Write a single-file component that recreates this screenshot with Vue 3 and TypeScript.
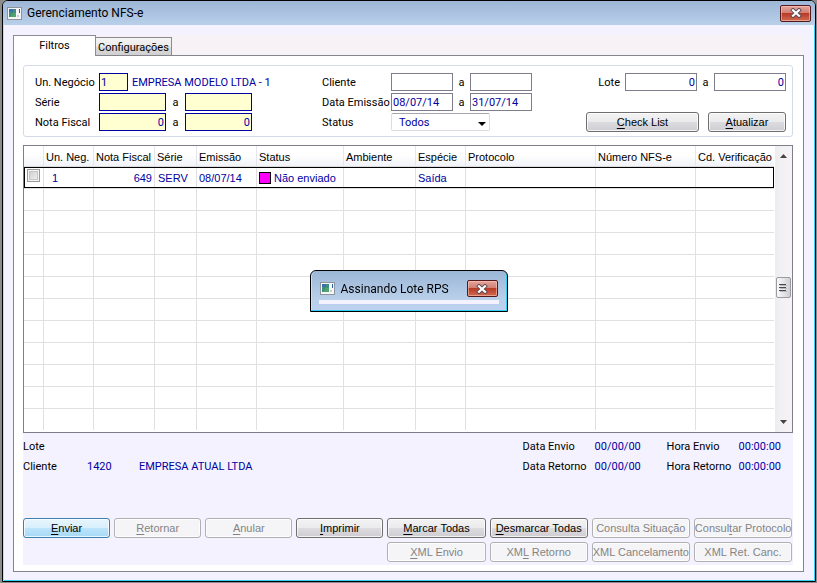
<script setup lang="ts">
import { ref } from 'vue'

interface Column {
  title: string
  width: number
}

interface Action {
  before: string
  key: string
  after: string
  disabled?: boolean
  primary?: boolean
}

const columns: Column[] = [
  { title: '', width: 20 },
  { title: 'Un. Neg.', width: 50 },
  { title: 'Nota Fiscal', width: 61 },
  { title: 'Série', width: 42 },
  { title: 'Emissão', width: 60 },
  { title: 'Status', width: 87 },
  { title: 'Ambiente', width: 72 },
  { title: 'Espécie', width: 50 },
  { title: 'Protocolo', width: 130 },
  { title: 'Número NFS-e', width: 100 },
  { title: 'Cd. Verificação', width: 78 },
]
const totalWidth = columns.reduce((sum, c) => sum + c.width, 0)
const emptyRows = 11

const mainActions: Action[] = [
  { before: '', key: 'E', after: 'nviar', primary: true },
  { before: '', key: 'R', after: 'etornar', disabled: true },
  { before: '', key: 'A', after: 'nular', disabled: true },
  { before: '', key: 'I', after: 'mprimir' },
  { before: '', key: 'M', after: 'arcar Todas' },
  { before: '', key: 'D', after: 'esmarcar Todas' },
  { before: 'Consulta Situação', key: '', after: '', disabled: true },
  { before: 'Consul', key: 't', after: 'ar Protocolo', disabled: true },
  { before: '', key: 'X', after: 'ML Envio', disabled: true },
  { before: 'XM', key: 'L', after: ' Retorno', disabled: true },
  { before: 'XML Cancelamento', key: '', after: '', disabled: true },
  { before: 'XML Ret. Canc.', key: '', after: '', disabled: true },
]

const unit = ref('1')
const serieFrom = ref('')
const serieTo = ref('')
const notaFrom = ref('0')
const notaTo = ref('0')
const clientFrom = ref('')
const clientTo = ref('')
const dateFrom = ref('08/07/14')
const dateTo = ref('31/07/14')
const loteFrom = ref('0')
const loteTo = ref('0')
const status = ref('Todos')
const checked = ref(false)
</script>

<template>
  <div class="desktop">
    <main class="window">
      <header class="titlebar">
        <svg class="app-icon" width="15" height="13" viewBox="0 0 15 13" aria-hidden="true">
          <rect x="0.5" y="0.5" width="14" height="12" fill="#f4f6f8" stroke="#8d949c" />
          <rect x="2" y="2" width="7" height="8" fill="#3f8f7c" />
          <path d="M2 2h4v3h-4z" fill="#3c6fae" />
          <path d="M6 6h3v4h-6z" fill="#4fa56a" />
          <rect x="10" y="8" width="2" height="2" fill="#c9ced4" />
          <rect x="12" y="2" width="1" height="4" fill="#2d5f9e" />
        </svg>
        <h1>Gerenciamento NFS-e</h1>
        <button type="button" class="close" aria-label="Fechar">
          <svg width="12" height="10" viewBox="0 0 12 10" aria-hidden="true">
            <path d="M3 2.2l6 5.6M9 2.2l-6 5.6" stroke="#5b4a52" stroke-width="4" stroke-linecap="square" />
            <path d="M3 2.2l6 5.6M9 2.2l-6 5.6" stroke="#fff" stroke-width="2.2" stroke-linecap="square" />
          </svg>
        </button>
      </header>

      <div class="body">
        <div class="tabs" role="tablist">
          <button type="button" role="tab" class="tab active" aria-selected="true">Filtros</button>
          <button type="button" role="tab" class="tab" aria-selected="false">Configurações</button>
        </div>

        <section class="panel">
          <form class="filters" @submit.prevent>
            <div class="group own">
              <label for="unit">Un. Negócio</label>
              <div class="unit">
                <input id="unit" v-model="unit" class="yellow short" />
                <span class="value">EMPRESA MODELO LTDA - 1</span>
              </div>
              <label for="serie">Série</label>
              <input id="serie" v-model="serieFrom" class="yellow" />
              <span class="to">a</span>
              <input v-model="serieTo" class="yellow" aria-label="Série final" />
              <label for="nota">Nota Fiscal</label>
              <input id="nota" v-model="notaFrom" class="yellow num" />
              <span class="to">a</span>
              <input v-model="notaTo" class="yellow num" aria-label="Nota Fiscal final" />
            </div>

            <div class="group client">
              <label for="client">Cliente</label>
              <input id="client" v-model="clientFrom" />
              <span class="to">a</span>
              <input v-model="clientTo" aria-label="Cliente final" />
              <label for="date">Data Emissão</label>
              <input id="date" v-model="dateFrom" />
              <span class="to">a</span>
              <input v-model="dateTo" aria-label="Data Emissão final" />
              <label for="status">Status</label>
              <div class="select">
                <select id="status" v-model="status">
                  <option>Todos</option>
                </select>
              </div>
            </div>

            <div class="lote">
              <div class="lote-row">
                <label for="lote">Lote</label>
                <input id="lote" v-model="loteFrom" class="num" />
                <span class="to">a</span>
                <input v-model="loteTo" class="num" aria-label="Lote final" />
              </div>
              <div class="lote-buttons">
                <button type="button" class="btn check"><u>C</u>heck List</button>
                <button type="button" class="btn refresh"><u>A</u>tualizar</button>
              </div>
            </div>
          </form>

          <div class="grid">
            <table>
              <colgroup>
                <col v-for="(c, i) in columns" :key="i" :style="{ width: (c.width / totalWidth) * 100 + '%' }" />
              </colgroup>
              <thead>
                <tr>
                  <th v-for="(c, i) in columns" :key="i" scope="col">{{ c.title }}</th>
                </tr>
              </thead>
              <tbody>
                <tr class="selected">
                  <td class="tick"><input v-model="checked" type="checkbox" aria-label="Selecionar nota 649" /></td>
                  <td class="unit-cell">1</td>
                  <td class="right">649</td>
                  <td>SERV</td>
                  <td class="tight">08/07/14</td>
                  <td class="tight"><span class="status"><i class="swatch"></i>Não enviado</span></td>
                  <td></td>
                  <td class="tight">Saída</td>
                  <td></td>
                  <td></td>
                  <td></td>
                </tr>
                <tr v-for="n in emptyRows" :key="n" class="empty">
                  <td v-for="(c, i) in columns" :key="i"></td>
                </tr>
              </tbody>
            </table>
            <div class="scrollbar" aria-hidden="true">
              <svg width="7" height="4" viewBox="0 0 7 4"><path d="M0 4L3.5 0L7 4z" fill="#444" /></svg>
              <div class="thumb">
                <svg width="8" height="8" viewBox="0 0 8 8"><path d="M0 0.5h7M0 3.5h7M0 6.5h7" stroke="#4a4a4a" /><path d="M1 1.5h7M1 4.5h7M1 7.5h7" stroke="#b9b9bd" /></svg>
              </div>
              <svg width="7" height="4" viewBox="0 0 7 4"><path d="M0 0L3.5 4L7 0z" fill="#444" /></svg>
            </div>
          </div>

          <footer class="footer">
            <div class="info">
              <dl class="info-left">
                <dt>Lote</dt><dd></dd><dd></dd>
                <dt>Cliente</dt><dd>1420</dd><dd>EMPRESA ATUAL LTDA</dd>
              </dl>
              <dl class="info-right">
                <dt>Data Envio</dt><dd>00/00/00</dd><dt>Hora Envio</dt><dd>00:00:00</dd>
                <dt>Data Retorno</dt><dd>00/00/00</dd><dt>Hora Retorno</dt><dd>00:00:00</dd>
              </dl>
            </div>
            <div class="actions">
              <button
                v-for="(a, i) in mainActions"
                :key="i"
                type="button"
                class="btn"
                :class="{ primary: a.primary, second: i === 8 }"
                :disabled="a.disabled"
              >{{ a.before }}<u v-if="a.key">{{ a.key }}</u>{{ a.after }}</button>
            </div>
          </footer>
        </section>
      </div>
    </main>

    <div class="dialog" role="dialog" aria-labelledby="dialog-title">
      <div class="dialog-bar">
        <svg class="app-icon" width="15" height="13" viewBox="0 0 15 13" aria-hidden="true">
          <rect x="0.5" y="0.5" width="14" height="12" fill="#f4f6f8" stroke="#8d949c" />
          <rect x="2" y="2" width="7" height="8" fill="#3f8f7c" />
          <path d="M2 2h4v3h-4z" fill="#3c6fae" />
          <path d="M6 6h3v4h-6z" fill="#4fa56a" />
          <rect x="10" y="8" width="2" height="2" fill="#c9ced4" />
          <rect x="12" y="2" width="1" height="4" fill="#2d5f9e" />
        </svg>
        <h2 id="dialog-title">Assinando Lote RPS</h2>
        <button type="button" class="close" aria-label="Fechar">
          <svg width="12" height="10" viewBox="0 0 12 10" aria-hidden="true">
            <path d="M3 2.2l6 5.6M9 2.2l-6 5.6" stroke="#5b4a52" stroke-width="4" stroke-linecap="square" />
            <path d="M3 2.2l6 5.6M9 2.2l-6 5.6" stroke="#fff" stroke-width="2.2" stroke-linecap="square" />
          </svg>
        </button>
      </div>
      <div class="dialog-body"></div>
    </div>
  </div>
</template>

<style>
body {
  margin: 0;
}
</style>

<style scoped>
* {
  box-sizing: border-box;
}
.desktop {
  display: flex;
  min-height: 100vh;
  padding: 0 1px 1px 2px;
  background: #8c8c8c;
  color: #000;
  font-family: Roboto, 'Liberation Sans', sans-serif;
  font-size: 11px;
  line-height: 14px;
}
button,
input,
select {
  margin: 0;
  font: inherit;
  color: inherit;
}
.window {
  flex: 1;
  min-width: 0;
  display: flex;
  flex-direction: column;
  border: 1px solid #000;
  border-radius: 6px 6px 0 0;
  background: #f5f2ff;
  box-shadow: inset 1px 0 #bfdcf2, inset -1px -1px #2fd2f5;
  overflow: hidden;
}
.titlebar {
  display: flex;
  align-items: center;
  height: 24px;
  padding: 0 4px;
  background: linear-gradient(#9cb6d6, #b9d0ea);
}
h1,
h2 {
  margin: 0;
  flex: 1;
  font-size: 12px;
  line-height: 16px;
  font-weight: 400;
}
h1 {
  padding-left: 5px;
}
.app-icon {
  flex: none;
}
.close {
  display: flex;
  align-items: center;
  justify-content: center;
  width: 31px;
  height: 17px;
  padding: 0;
  border: 1px solid #54191c;
  border-radius: 2px;
  background: linear-gradient(#e3a49a, #d27e72 48%, #b93a26 50%, #cf6c50);
  box-shadow: inset 0 0 0 1px rgba(255, 205, 195, 0.55);
}
.body {
  flex: 1;
  display: flex;
  flex-direction: column;
  padding: 10px 11px 9px 10px;
}
.tabs {
  display: flex;
  align-items: flex-end;
  height: 20px;
  background: #f6f2f5;
}
.tab {
  height: 18px;
  padding: 2px 2px 0;
  border: 1px solid #8b8b93;
  border-bottom: 0;
  border-left: 0;
  background: linear-gradient(#f4f4f4, #ebebeb 50%, #dcdcdc 52%, #d0d0d0);
}
.tab.active {
  position: relative;
  z-index: 1;
  width: 83px;
  height: 21px;
  margin-bottom: -1px;
  padding: 0;
  border-left: 1px solid #8b8b93;
  background: #fff;
}
.panel {
  flex: 1;
  display: flex;
  flex-direction: column;
  padding: 9px 10px 6px 9px;
  border: 1px solid #85858d;
  background: #fff;
}
.filters {
  display: flex;
  padding: 7px 6px 4px 11px;
  border: 1px solid #d3dce6;
  border-radius: 3px;
}
.group {
  display: grid;
  grid-auto-rows: 18px;
  row-gap: 2px;
  align-items: center;
  padding-bottom: 1px;
}
.own {
  grid-template-columns: 64px 67px 19px 67px;
}
.client {
  grid-template-columns: 69px 62px 17px 62px;
  margin-left: 70px;
}
label,
.to,
.value {
  padding-top: 2px;
  white-space: nowrap;
}
.to {
  min-width: 7px;
  text-align: center;
}
.unit {
  grid-column: 2 / -1;
  display: flex;
  align-items: center;
  gap: 4px;
}
.value {
  color: #0000a0;
}
.filters input {
  width: 100%;
  height: 18px;
  min-width: 0;
  padding: 1px 1px 0;
  border: 1px solid #7d7d8c;
  background: #fff;
  color: #0000a0;
  outline: 0;
}
.filters .yellow {
  border-color: #0000a0;
  background: #ffffd2;
}
.filters .short {
  flex: none;
  width: 29px;
}
.filters .num {
  text-align: right;
}
.select {
  position: relative;
  grid-column: 2 / -1;
  width: 99px;
}
.select::after {
  content: '';
  position: absolute;
  top: 9px;
  right: 4px;
  border: 4px solid transparent;
  border-top-color: #000;
  border-bottom: 0;
  pointer-events: none;
}
select {
  display: block;
  width: 100%;
  height: 18px;
  padding: 2px 7px 0;
  appearance: none;
  border: 1px solid #dcdce4;
  border-top-color: #a5a5ad;
  border-radius: 2px;
  background: #fff;
  color: #0000a0;
}
.lote {
  display: flex;
  flex-direction: column;
  justify-content: space-between;
  margin-left: auto;
}
.lote-row {
  display: flex;
  align-items: center;
  justify-content: flex-end;
  gap: 5px;
}
.filters .lote-row input {
  width: 72px;
}
.lote-buttons {
  display: flex;
  gap: 9px;
}
.btn {
  height: 20px;
  padding: 0;
  border: 1px solid #6f6f6f;
  border-radius: 3px;
  background: linear-gradient(#f3f3f4, #ebebed 48%, #dcdbdf 52%, #cfcdd3);
  box-shadow: inset 0 0 0 1px rgba(255, 255, 255, 0.75);
  font-family: 'Liberation Sans', sans-serif;
  white-space: nowrap;
}
.btn u {
  text-underline-offset: 2px;
}
.btn:disabled {
  border-color: #b1b1b4;
  background: #f5f5f7;
  color: #848484;
}
.btn.primary {
  border-color: #3c7fb1;
  background: linear-gradient(#e8f5fc, #d8effc 48%, #bce4fb 52%, #a6d9f6);
}
.check {
  width: 113px;
}
.refresh {
  width: 78px;
}
.grid {
  display: flex;
  margin-top: 8px;
  border: 1px solid #7d7d8c;
}
table {
  flex: 1;
  min-width: 0;
  align-self: flex-start;
  table-layout: fixed;
  border-spacing: 0;
  font-family: 'Liberation Sans', sans-serif;
}
th,
td {
  padding: 0 3px;
  overflow: hidden;
  font-weight: 400;
  text-align: left;
  white-space: nowrap;
}
th {
  height: 21px;
  padding: 2px 2px 0;
  border-right: 1px solid #e4e6ec;
  border-bottom: 1px solid #dcdcde;
  background: linear-gradient(#fff 45%, #f1f3f8);
}
td {
  height: 22px;
  border-top: 1px solid #e2dfe2;
  border-right: 1px solid #e2dfe2;
  color: #0000a0;
}
th:last-child,
td:last-child {
  border-right: 0;
}
.selected {
  outline: 1px solid #000;
  outline-offset: -1px;
}
.selected td {
  height: 21px;
  border-top: 0;
}
.tick {
  padding: 0 2px;
}
.tick input {
  display: block;
  width: 13px;
  height: 13px;
  margin: 0 0 4px 1px;
  appearance: none;
  border: 1px solid #9a9a9a;
  background: linear-gradient(135deg, #c8c8c8, #f6f6f6);
  box-shadow: inset 0 0 0 1px #f4f4f4, inset 0 0 0 2px #c4c8c8;
}
.unit-cell {
  padding-left: 8px;
}
.right {
  text-align: right;
  padding-right: 2px;
}
.tight {
  padding: 0 2px;
}
.status {
  display: flex;
  align-items: center;
  gap: 3px;
}
.swatch {
  width: 12px;
  height: 12px;
  border: 1px solid #000;
  background: #f0f;
}
.scrollbar {
  display: flex;
  flex-direction: column;
  align-items: center;
  justify-content: space-between;
  width: 18px;
  min-height: 286px;
  padding: 8px 1px;
  background: linear-gradient(90deg, #fff 1px, #ececee 1px, #f3f1f4 9px, #f6f2f5);
}
.thumb {
  display: flex;
  align-items: center;
  justify-content: center;
  width: 15px;
  height: 21px;
  margin-bottom: 3px;
  border: 1px solid #9b9ba0;
  border-radius: 2px;
  background: linear-gradient(90deg, #f8f8f9, #e6e6e9 50%, #cfcfd4);
}
.footer {
  flex: 1;
  display: flex;
  flex-direction: column;
  justify-content: space-between;
  padding: 4px 0 3px;
  background: #f5f2ff;
}
.info {
  display: flex;
  justify-content: space-between;
  padding-right: 12px;
}
dl {
  display: grid;
  grid-auto-rows: 20px;
  align-items: center;
  margin: 0;
}
dd {
  margin: 0;
  color: #0000a0;
}
.info-left {
  grid-template-columns: 64px 52px auto;
}
.info-right {
  grid-template-columns: 72px 72px 72px auto;
}
.actions {
  display: grid;
  grid-template-columns: repeat(4, minmax(0, 87fr)) repeat(4, minmax(0, 98fr));
  gap: 4px;
  padding-right: 1px;
}
.second {
  grid-column: 5;
}
.dialog {
  position: fixed;
  inset: 0 0 1px;
  width: 198px;
  height: 42px;
  margin: auto;
  padding: 0 8px;
  border: 1px solid #000;
  border-radius: 6px 6px 0 0;
  background: linear-gradient(#9cb6d6, #b9d0ea 28px, #bcd2f0);
  box-shadow: inset -1px -1px #2fd2f5, inset 1px 0 #cfe0f2;
}
.dialog-bar {
  display: flex;
  align-items: center;
  height: 29px;
  padding: 6px 1px 0;
}
h2 {
  padding-left: 6px;
}
.dialog-body {
  height: 4px;
  background: #f5f2ff;
}
</style>
